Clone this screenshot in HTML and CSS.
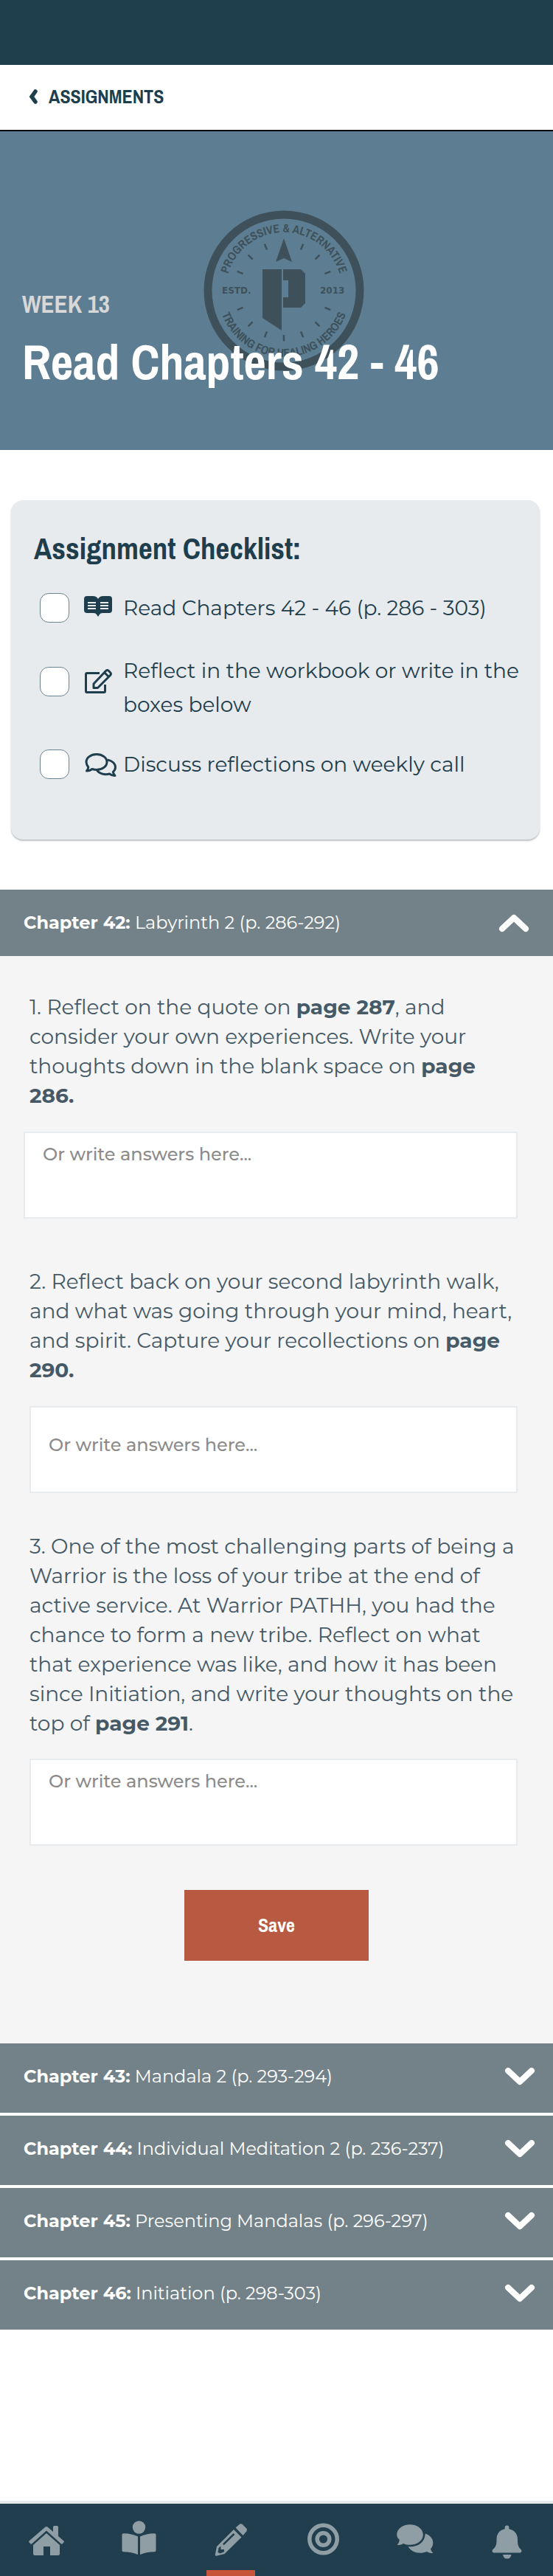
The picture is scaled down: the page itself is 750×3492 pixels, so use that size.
FILE: index.html
```html
<!DOCTYPE html>
<html lang="en">
<head>
<meta charset="utf-8">
<meta name="viewport" content="width=device-width, initial-scale=1">
<title>Read Chapters 42 - 46</title>
<link rel="stylesheet" href="styles.css">
</head>
<body class="page">
<div class="status-bar"></div>
<header class="top-bar">
  <a class="back" href="#">
    <svg class="back-icon" viewBox="0 0 12 20" aria-hidden="true"><path d="M9 3 4 10l5 7" fill="none" stroke="currentColor" stroke-width="5.5" stroke-linecap="round"/></svg>
    ASSIGNMENTS
  </a>
</header>

<main class="content">
  <section class="hero">
    <svg class="hero-logo" viewBox="0 0 218 218" aria-hidden="true">
      <defs>
        <path id="arc-top" d="M30 109a79 79 0 0 1 158 0"/>
        <path id="arc-bottom" d="M19 109a90 90 0 0 0 180 0"/>
        <path id="tick" d="M109 40.500v8.500"/>
      </defs>
      <circle cx="109" cy="109" r="103" fill="none" stroke="currentColor" stroke-width="11"/>
      <g fill="currentColor">
        <path d="M109 38l11 32-11-5-11 5z"/>
        <path d="M80 80h26v83l-26-17z"/>
        <path d="M108 80h24l6 6v40l-6 6h-24v-14h7V95h-7z"/>
      </g>
      <g stroke="currentColor" stroke-width="2.500">
        <use href="#tick" transform="rotate(22.500 109 109)"/>
        <use href="#tick" transform="rotate(45 109 109)"/>
        <use href="#tick" transform="rotate(67.500 109 109)"/>
        <use href="#tick" transform="rotate(112.500 109 109)"/>
        <use href="#tick" transform="rotate(135 109 109)"/>
        <use href="#tick" transform="rotate(157.500 109 109)"/>
        <use href="#tick" transform="rotate(180 109 109)"/>
        <use href="#tick" transform="rotate(202.500 109 109)"/>
        <use href="#tick" transform="rotate(225 109 109)"/>
        <use href="#tick" transform="rotate(247.500 109 109)"/>
        <use href="#tick" transform="rotate(292.500 109 109)"/>
        <use href="#tick" transform="rotate(315 109 109)"/>
        <use href="#tick" transform="rotate(337.500 109 109)"/>
      </g>
      <g fill="currentColor">
        <text class="logo-arc" text-anchor="middle"><textPath href="#arc-top" startOffset="50%">PROGRESSIVE &amp; ALTERNATIVE</textPath></text>
        <text class="logo-arc" text-anchor="middle"><textPath href="#arc-bottom" startOffset="50%">TRAINING FOR HEALING HEROES</textPath></text>
        <text class="logo-side" x="25" y="113">ESTD.</text>
        <text class="logo-side" x="158" y="113">2013</text>
      </g>
    </svg>
    <p class="hero-week">WEEK 13</p>
    <h1 class="hero-title">Read Chapters 42 - 46</h1>
  </section>

  <section class="checklist">
    <h2 class="checklist-title">Assignment Checklist:</h2>
    <label class="check">
      <input class="check-box" type="checkbox">
      <svg class="check-icon" viewBox="0 0 46 40" aria-hidden="true">
        <path fill="currentColor" d="M5 4h8q5 0 7 4 2-4 7-4h8q4 0 4 4v15q0 4-4 4h-9q-3 0-4 2l-2 3-2-3q-1-2-4-2H5q-4 0-4-4V8q0-4 4-4z"/>
        <path stroke="#e7ebee" stroke-width="2" d="M6 13h11M6 17h11M6 21h11M23 13h11M23 17h11M23 21h11"/>
      </svg>
      <span class="check-text">Read Chapters 42 - 46 (p. 286 - 303)</span>
    </label>
    <label class="check check-tall">
      <input class="check-box" type="checkbox">
      <svg class="check-icon" viewBox="0 0 46 40" aria-hidden="true">
        <g fill="none" stroke="currentColor" stroke-width="3" stroke-linejoin="round">
          <path d="M22 8.500H5q-1.500 0-1.500 1.500v23q0 1.500 1.500 1.500h23q1.500 0 1.500-1.500V24"/>
          <path d="M14 28.500v-5.500L30.500 5.500q2-2 4 0l2 2q2 2 0 4L20 28q-.5.500-1 .5zM29 8l5.500 5.500"/>
        </g>
      </svg>
      <span class="check-text">Reflect in the workbook or write in the boxes below</span>
    </label>
    <label class="check">
      <input class="check-box" type="checkbox">
      <svg class="check-icon" viewBox="0 0 46 40" aria-hidden="true">
        <g fill="none" stroke="currentColor" stroke-width="3" stroke-linejoin="round">
          <path d="M18 6.500c8 0 14 4.700 14 10.500s-6 10.500-14 10.500c-2 0-4-.4-6-1-2 1.600-4.500 2.700-7.500 2.500 1.500-1.600 2.200-3.200 2.300-5C5 21.500 4 19.500 4 17 4 11.200 10 6.500 18 6.500z"/>
          <path d="M32.500 14c6.500 1 11 5 11 10 0 2.700-1.300 4.700-3.200 6.500.3 2 1.200 3.500 2.700 5-3 .2-5.500-1-7.500-2.500-7 1.800-14.500-.5-17-5"/>
        </g>
      </svg>
      <span class="check-text">Discuss reflections on weekly call</span>
    </label>
  </section>

  <section class="chapters">
    <button class="chapter chapter-open" type="button" aria-expanded="true">
      <span><b>Chapter 42:</b> Labyrinth 2 (p. 286-292)</span>
      <svg class="chevron" viewBox="0 0 42 26" aria-hidden="true"><path d="M5 21 21 6l16 15" fill="none" stroke="currentColor" stroke-width="8" stroke-linecap="round" stroke-linejoin="round"/></svg>
    </button>
    <form class="panel">
      <label class="question" for="answer-1">1. Reflect on the quote on <b>page 287</b>, and<br>consider your own experiences. Write your<br>thoughts down in the blank space on <b>page<br>286.</b></label>
      <textarea class="answer answer-wide" id="answer-1" placeholder="Or write answers here..."></textarea>
      <label class="question" for="answer-2">2. Reflect back on your second labyrinth walk,<br>and what was going through your mind, heart,<br>and spirit. Capture your recollections on <b>page<br>290.</b></label>
      <textarea class="answer answer-low" id="answer-2" placeholder="Or write answers here..."></textarea>
      <label class="question" for="answer-3">3. One of the most challenging parts of being a<br>Warrior is the loss of your tribe at the end of<br>active service. At Warrior PATHH, you had the<br>chance to form a new tribe. Reflect on what<br>that experience was like, and how it has been<br>since Initiation, and write your thoughts on the<br>top of <b>page 291</b>.</label>
      <textarea class="answer answer-last" id="answer-3" placeholder="Or write answers here..."></textarea>
      <button class="save" type="button">Save</button>
    </form>
    <div class="chapter-list">
      <button class="chapter" type="button" aria-expanded="false">
        <span><b>Chapter 43:</b> Mandala 2 (p. 293-294)</span>
        <svg class="chevron" viewBox="0 0 42 26" aria-hidden="true"><path d="M5 5l16 15L37 5" fill="none" stroke="currentColor" stroke-width="8" stroke-linecap="round" stroke-linejoin="round"/></svg>
      </button>
      <button class="chapter" type="button" aria-expanded="false">
        <span><b>Chapter 44:</b> Individual Meditation 2 (p. 236-237)</span>
        <svg class="chevron" viewBox="0 0 42 26" aria-hidden="true"><path d="M5 5l16 15L37 5" fill="none" stroke="currentColor" stroke-width="8" stroke-linecap="round" stroke-linejoin="round"/></svg>
      </button>
      <button class="chapter" type="button" aria-expanded="false">
        <span><b>Chapter 45:</b> Presenting Mandalas (p. 296-297)</span>
        <svg class="chevron" viewBox="0 0 42 26" aria-hidden="true"><path d="M5 5l16 15L37 5" fill="none" stroke="currentColor" stroke-width="8" stroke-linecap="round" stroke-linejoin="round"/></svg>
      </button>
      <button class="chapter" type="button" aria-expanded="false">
        <span><b>Chapter 46:</b> Initiation (p. 298-303)</span>
        <svg class="chevron" viewBox="0 0 42 26" aria-hidden="true"><path d="M5 5l16 15L37 5" fill="none" stroke="currentColor" stroke-width="8" stroke-linecap="round" stroke-linejoin="round"/></svg>
      </button>
    </div>
  </section>
</main>

<nav class="tabs" aria-label="Main">
  <a class="tab" href="#" aria-label="Home">
    <svg class="tab-icon" viewBox="0 0 54 54" fill="currentColor" aria-hidden="true">
      <path d="M26.500 10.500q1.500-1 3 0L37 17v-6.500q0-1.500 1.500-1.500h4q1.500 0 1.500 1.500V23l7.500 6.500q.8.700.2 1.500l-2.200 2.400q-.7.700-1.500 0L28 15.500 8 33.400q-.8.700-1.500 0L4.300 31q-.6-.8.200-1.500z" transform="translate(-1 0)"/>
      <path d="M27 19l18 16v12q0 2-2 2H32V37h-9v12H11q-2 0-2-2V35z"/>
    </svg>
  </a>
  <a class="tab" href="#" aria-label="Read">
    <svg class="tab-icon" viewBox="0 0 54 54" fill="currentColor" aria-hidden="true">
      <circle cx="27.500" cy="11" r="8.700"/>
      <path d="M6.500 19.300Q18 19.500 26 23.500V48q-8-3.500-19.500-3.800-2 0-2-2V21q0-1.700 2-1.700zM48.500 19.300Q37 19.500 29 23.500V48q8-3.500 19.500-3.800 2 0 2-2V21q0-1.700-2-1.700z"/>
    </svg>
  </a>
  <a class="tab tab-active" href="#" aria-label="Assignments" aria-current="page">
    <svg class="tab-icon" viewBox="0 0 54 54" fill="currentColor" aria-hidden="true">
      <path d="M33.500 11.500 39 6.800q2-1.300 4 .5l5 5q2 2 .5 4L43.500 22z"/>
      <path fill-rule="evenodd" d="M31 14l10.500 10.500-23 22.500-11 2.800q-2 .3-1.700-1.700L8 37zM30.500 19 16 33.500l1.700 1.700 14.800-14.500zM10.500 39l-1 6q3 2 5.500.5l3-1.500v-3h-4.500v-4.500z"/>
    </svg>
  </a>
  <a class="tab" href="#" aria-label="Goals">
    <svg class="tab-icon" viewBox="0 0 54 54" fill="none" stroke="currentColor" stroke-width="5.500" aria-hidden="true">
      <circle cx="27.500" cy="27" r="18.700"/>
      <circle cx="27.500" cy="27" r="8.300"/>
    </svg>
  </a>
  <a class="tab" href="#" aria-label="Messages">
    <svg class="tab-icon" viewBox="0 0 54 54" fill="currentColor" aria-hidden="true">
      <path d="M20 7.300c10 0 17.800 6 17.800 13.700S30 34.800 20 34.800c-3.300 0-6.500-.7-9-1.900-2.500 1.700-5.500 2.300-8.500 2 2-2 3-4.500 3.300-7-2.300-2-3.600-4.300-3.600-6.900C2.200 13.300 10 7.300 20 7.300z"/>
      <path d="M40.800 19.500c6.500 2 10.500 7 10.500 12.700 0 3-1.200 5.800-3.300 8 .5 2 1.600 3.800 3.300 5.800-3.300.3-6-.8-8.500-2.100-9.300 4-21 1.200-25.300-6.900 12 1.300 22.700-4.800 23.300-17.500z"/>
    </svg>
  </a>
  <a class="tab" href="#" aria-label="Notifications">
    <svg class="tab-icon" viewBox="0 0 54 54" fill="currentColor" aria-hidden="true">
      <path d="M26.500 8.500q2.800 0 2.800 2.700v2C36.500 14.500 41 20 41 27v3c0 5 1.500 8.500 4.500 11 2 2 .5 4.500-1.500 4.500H9c-2 0-3.500-2.500-1.500-4.500 3-2.500 5-6 5-11v-3c0-7 4-12.500 11.200-13.800v-2q0-2.700 2.800-2.700z"/>
      <path d="M21 48h11.500q-.8 5.500-5.700 5.500T21 48z"/>
    </svg>
  </a>
</nav>
</body>
</html>
```

FILE: styles.css
```css
* {
  box-sizing: border-box;
}

.page {
  --navy: #1f3e4d;
  --slate: #738288;
  --display: "Archivo Narrow", "Roboto Condensed", Roboto, sans-serif;
  --text: Montserrat, Inter, "Noto Sans", sans-serif;
  display: flex;
  flex-direction: column;
  min-height: 100vh;
  margin: 0;
  background: #fff;
  color: var(--navy);
  font-family: var(--text);
}

.status-bar {
  height: 88px;
  background: #203f4c;
}

.top-bar {
  display: flex;
  align-items: center;
  height: 90px;
  padding: 0 39px 2px;
  border-bottom: 2px solid #000;
}

.back {
  display: flex;
  align-items: center;
  gap: 15px;
  color: inherit;
  font: bold 26px/32px var(--display);
  text-decoration: none;
}

.back-icon {
  width: 12px;
  height: 20px;
}

.hero {
  position: relative;
  height: 432px;
  padding: 214px 30px 0;
  background: #5d7e92;
}

.hero-logo {
  position: absolute;
  top: 107px;
  left: calc(50% - 99px);
  width: 218px;
  height: 218px;
  color: #3e515b;
}

.logo-arc {
  font: bold 16px var(--display);
}

.logo-side {
  font: bold 12px "DejaVu Sans", sans-serif;
}

.hero-week,
.hero-title {
  position: relative;
  margin: 0;
  font-family: var(--display);
  font-weight: bold;
}

.hero-week {
  color: #d8d8d8;
  font-size: 33px;
  line-height: 40px;
}

.hero-title {
  margin-top: 19px;
  color: #fff;
  font-size: 66px;
  line-height: 80px;
}

.checklist {
  margin: 68px 18px 0 15px;
  padding: 44px 20px 72px 31px;
  border-radius: 16px;
  background: #e7ebee;
  box-shadow: 0 2px 2px #bfc3c5;
}

.checklist-title {
  margin: 0 0 28px;
  font: bold 41px/44px var(--display);
}

.check {
  display: flex;
  align-items: center;
  min-height: 60px;
  padding-left: 8px;
}

.check-box {
  flex: none;
  width: 40px;
  height: 40px;
  margin: 0 19px 0 0;
  border: 1px solid #6d848f;
  border-radius: 12px;
  background: #fff;
  appearance: none;
}

.check-icon {
  flex: none;
  width: 46px;
  height: 40px;
  margin-right: 8px;
}

.check-text {
  font-size: 28px;
  line-height: 46px;
}

.check-tall {
  margin: 32px 0 28px;
}

.check-tall .check-box,
.check-tall .check-icon {
  margin-bottom: 16px;
}

.chapters {
  margin-top: 68px;
}

.chapter {
  display: flex;
  align-items: center;
  justify-content: space-between;
  width: 100%;
  height: 94px;
  padding: 0 24px 5px 32px;
  border: 0;
  background: var(--slate);
  color: #fff;
  font: 24px/32px var(--text);
  text-align: left;
}

.chapter b {
  font-weight: 700;
}

.chapter-open {
  height: 90px;
  padding: 0 32px 0 32px;
}

.chevron {
  flex: none;
  width: 42px;
  height: 26px;
}

.chapter-list {
  display: flex;
  flex-direction: column;
  gap: 4px;
}

.panel {
  display: flex;
  flex-direction: column;
  padding: 49px 40px 112px;
  background: #f5f5f5;
}

.question {
  color: #455967;
  font-size: 28px;
  line-height: 40px;
  white-space: nowrap;
}

.question b {
  font-weight: 700;
}

.answer {
  height: 118px;
  margin: 29px 8px 52px 0;
  padding: 13px 24px;
  border: 2px solid #e7ebee;
  background: #fff;
  color: #455967;
  font: 500 24px/32px var(--text);
  resize: none;
}

.answer::placeholder {
  color: #8b8b8b;
}

.answer-wide {
  margin-bottom: 65px;
  margin-left: -8px;
}

.answer-low {
  padding-top: 35px;
}

.answer-last {
  margin-top: 28px;
}

.save {
  align-self: center;
  width: 250px;
  height: 96px;
  margin-top: 8px;
  border: 0;
  background: #b85942;
  color: #fff;
  font: bold 26px/32px var(--display);
}

.tabs {
  display: grid;
  grid-template-columns: repeat(6, 1fr);
  height: 102px;
  margin-top: auto;
  border-top: 4px solid #e4e8eb;
  background: #203e4d;
}

.tab {
  display: flex;
  flex-direction: column;
  align-items: center;
  padding-top: 21px;
  color: #8f9ea5;
}

.tab-active {
  justify-content: space-between;
}

.tab-active::after {
  width: 66px;
  height: 8px;
  background: #c65439;
  content: "";
}

.tab-icon {
  width: 54px;
  height: 54px;
}
```
